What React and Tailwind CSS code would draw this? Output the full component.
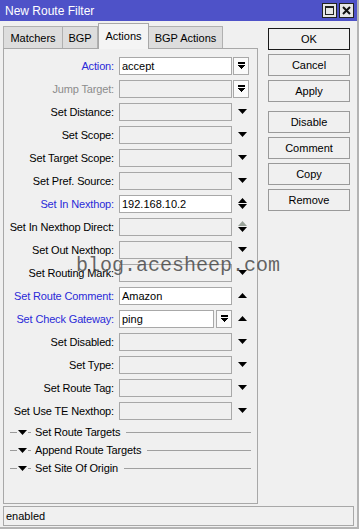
import React from "react";

const rows = [
  { label: "Action", tone: "text-[#2a2ad8]", value: "accept", filled: true, button: "select" },
  { label: "Jump Target", tone: "text-[#8c8c8c]", button: "select" },
  { label: "Set Distance", arrow: "down" },
  { label: "Set Scope", arrow: "down" },
  { label: "Set Target Scope", arrow: "down" },
  { label: "Set Pref. Source", arrow: "down" },
  { label: "Set In Nexthop", tone: "text-[#2a2ad8]", value: "192.168.10.2", filled: true, arrow: "updown" },
  { label: "Set In Nexthop Direct", arrow: "updown-dim" },
  { label: "Set Out Nexthop", arrow: "down" },
  { label: "Set Routing Mark", arrow: "down" },
  { label: "Set Route Comment", tone: "text-[#2a2ad8]", value: "Amazon", filled: true, arrow: "up" },
  { label: "Set Check Gateway", tone: "text-[#2a2ad8]", value: "ping", filled: true, inlineSelect: true, arrow: "up" },
  { label: "Set Disabled", arrow: "down" },
  { label: "Set Type", arrow: "down" },
  { label: "Set Route Tag", arrow: "down" },
  { label: "Set Use TE Nexthop", arrow: "down" },
];

const sections = ["Set Route Targets", "Append Route Targets", "Set Site Of Origin"];
const buttons = ["OK", "Cancel", "Apply", "Disable", "Comment", "Copy", "Remove"];

function SelectIcon() {
  return (
    <svg width="7" height="8" viewBox="0 0 7 8" shapeRendering="crispEdges">
      <rect x="0" y="0" width="7" height="2" fill="#000" />
      <polygon points="0,3 7,3 3.5,7.5" fill="#000" />
    </svg>
  );
}

function SelectButton() {
  return (
    <div className="flex h-[18px] w-[16px] items-center justify-center border border-[#a8a8a8] bg-[#fafafa]">
      <SelectIcon />
    </div>
  );
}

function Arrow({ kind }) {
  if (kind === "down") {
    return (
      <svg width="9" height="5" viewBox="0 0 9 5">
        <polygon points="0,0 9,0 4.5,5" fill="#000" />
      </svg>
    );
  }
  if (kind === "up") {
    return (
      <svg width="9" height="5" viewBox="0 0 9 5">
        <polygon points="0,5 9,5 4.5,0" fill="#000" />
      </svg>
    );
  }
  const top = kind === "updown-dim" ? "#9aa39a" : "#000";
  return (
    <svg width="9" height="11" viewBox="0 0 9 11">
      <polygon points="0,5 9,5 4.5,0" fill={top} />
      <polygon points="0,6 9,6 4.5,11" fill="#000" />
    </svg>
  );
}

function Row({ label, tone = "text-black", value, filled, button, arrow, inlineSelect }) {
  const field = filled ? "bg-white" : "bg-[#f0f0f0]";
  return (
    <div className="flex h-[23px] items-center">
      <div className={`w-[110px] whitespace-nowrap text-right tracking-[-0.15px] ${tone}`}>{label}:</div>
      <div className="ml-[5px] flex w-[113px] items-center">
        <div
          className={`flex h-[18px] items-center border border-[#a8a8a8] pl-[2px] ${field} ${
            inlineSelect ? "w-[95px]" : "w-[113px]"
          }`}
        >
          {value}
        </div>
        {inlineSelect && (
          <div className="ml-[2px]">
            <SelectButton />
          </div>
        )}
      </div>
      {button ? (
        <div className="ml-[1px]">
          <SelectButton />
        </div>
      ) : (
        <div className="ml-[2px] flex w-[17px] justify-center">{arrow && <Arrow kind={arrow} />}</div>
      )}
    </div>
  );
}

function Section({ title }) {
  return (
    <div className="flex h-[18px] items-center">
      <div className="ml-[6px] h-px w-[7px] bg-[#9a9a9a]" />
      <svg width="9" height="5" viewBox="0 0 9 5" className="mx-[1px]">
        <polygon points="0,0 9,0 4.5,5" fill="#000" />
      </svg>
      <div className="h-px w-[3px] bg-[#9a9a9a]" />
      <span className="ml-[4px] whitespace-nowrap tracking-[-0.15px]">{title}</span>
      <div className="ml-[6px] mr-[6px] h-px flex-1 bg-[#a0a0a0]" />
    </div>
  );
}

export default function App() {
  return (
    <div className="relative flex h-[529px] w-[359px] flex-col border-b-[2px] border-r-[2px] border-[#b4b4b4] bg-[#f0f0f0] font-['Liberation_Sans',Arial,sans-serif] text-[11px] text-black">
      <div className="flex h-[22px] items-center justify-between bg-[#4e52c8] pl-[5px] pr-[3px]">
        <span className="text-[12px] text-white">New Route Filter</span>
        <div className="flex gap-[2px]">
          <div className="flex h-[15px] w-[15px] items-center justify-center border border-[#222] bg-[#e6e6e6]">
            <div className="h-[9px] w-[9px] border border-t-2 border-[#222]" />
          </div>
          <div className="flex h-[15px] w-[15px] items-center justify-center border border-[#222] bg-[#e6e6e6]">
            <svg width="9" height="9" viewBox="0 0 9 9">
              <path d="M1 1 L8 8 M8 1 L1 8" stroke="#111" strokeWidth="2" />
            </svg>
          </div>
        </div>
      </div>

      <div className="flex flex-1">
        <div className="ml-[3px] flex w-[255px] flex-col">
          <div className="relative z-10 flex h-[27px] items-end">
            <div className="flex h-[22px] w-[60px] items-center justify-center border border-b-0 border-[#b0b0b0] bg-[#dddddd]">
              Matchers
            </div>
            <div className="flex h-[22px] w-[35px] items-center justify-center border border-b-0 border-l-0 border-[#b0b0b0] bg-[#dddddd]">
              BGP
            </div>
            <div className="mb-[-1px] flex h-[26px] w-[51px] items-center justify-center border border-b-0 border-[#a8a8a8] bg-[#f4f4f4] pb-[2px]">
              Actions
            </div>
            <div className="flex h-[22px] w-[74px] items-center justify-center border border-b-0 border-l-0 border-[#b0b0b0] bg-[#dddddd]">
              BGP Actions
            </div>
          </div>
          <div className="flex h-[456px] flex-col border border-[#a8a8a8] pt-[5px]">
            {rows.map((r) => (
              <Row key={r.label} {...r} />
            ))}
            <div className="h-px" />
            {sections.map((s) => (
              <Section key={s} title={s} />
            ))}
          </div>
        </div>

        <div className="ml-[10px] mt-[7px] flex w-[82px] flex-col">
          {buttons.map((b, i) => (
            <div
              key={b}
              className={`flex h-[22px] items-center justify-center border bg-[#f0f0f0] ${
                i === 0 ? "border-[#1a1a1a]" : "border-[#9a9a9a]"
              } ${i === 3 ? "mt-[9px]" : i > 0 ? "mt-[4px]" : ""}`}
            >
              {b}
            </div>
          ))}
        </div>
      </div>

      <div className="mx-[3px] mb-[1px] mt-[2px] flex h-[20px] items-center border border-[#a8a8a8] pl-[2px]">
        enabled
      </div>

      <div className="pointer-events-none absolute left-[76px] top-[256px] font-['Liberation_Mono','Courier_New',monospace] text-[20px] leading-none text-[#4a4a4a]/85">
        blog.acesheep.com
      </div>
    </div>
  );
}
